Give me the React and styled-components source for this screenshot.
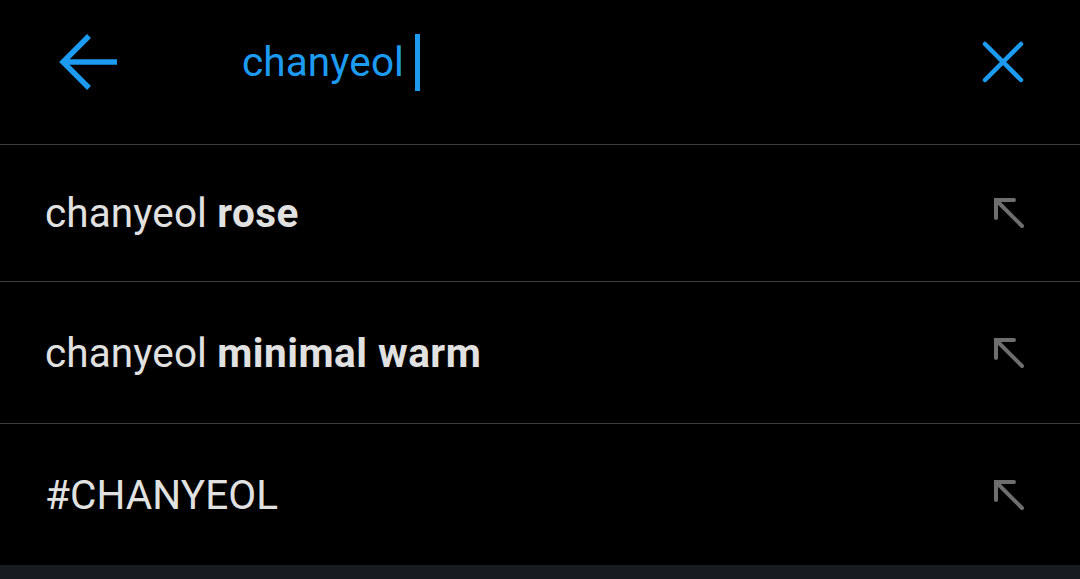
import React from 'react';
import styled, { createGlobalStyle } from 'styled-components';

const BLUE = '#1d9bf0';
const TEXT = '#e1e1e1';
const MUTED = '#6e6e6e';
const LINE = '#3c3c3c';

const GlobalStyle = createGlobalStyle`
  html, body {
    margin: 0;
    padding: 0;
    background: #000;
  }
  body {
    font-family: Roboto, "Liberation Sans", sans-serif;
  }
`;

const PageStyled = styled.div`
  width: 1080px;
  height: 579px;
  display: flex;
  flex-direction: column;
  background: #000;
  overflow: hidden;
`;

const SearchBarStyled = styled.div`
  height: 145px;
  box-sizing: border-box;
  display: flex;
  align-items: center;
  padding: 0 56px 20px 58px;
  border-bottom: 1px solid ${LINE};
  flex-shrink: 0;
`;

const IconButtonStyled = styled.button`
  background: none;
  border: 0;
  padding: 0;
  display: flex;
  align-items: center;
  justify-content: center;
  width: ${({ size }) => size}px;
  height: ${({ size }) => size}px;
`;

const QueryStyled = styled.div`
  flex: 1;
  display: flex;
  align-items: center;
  margin-left: 122px;
  font-size: 40.5px;
  color: ${BLUE};
  letter-spacing: 0.1px;
`;

const CaretStyled = styled.span`
  display: inline-block;
  width: 4.5px;
  height: 57px;
  margin-left: 11px;
  background: ${BLUE};
`;

const SuggestionStyled = styled.div`
  height: ${({ rowHeight }) => rowHeight}px;
  display: flex;
  align-items: center;
  justify-content: space-between;
  padding: 0 55px 0 45px;
  border-bottom: 1px solid ${LINE};
  flex-shrink: 0;
`;

const SuggestionTextStyled = styled.span`
  font-size: 40.5px;
  color: ${TEXT};
  letter-spacing: 0.1px;
  b {
    font-weight: 700;
    letter-spacing: 0.5px;
  }
`;

const FooterStyled = styled.div`
  flex: 1;
  margin-top: -1px;
  background: #181b20;
`;

const BackIcon = () => (
  <svg width="62" height="62" viewBox="0 0 62 62" fill="none">
    <path d="M59 31H5M31 5L5 31L31 57" stroke={BLUE} strokeWidth="5.5" strokeLinecap="butt" />
  </svg>
);

const CloseIcon = () => (
  <svg width="42" height="42" viewBox="0 0 42 42" fill="none">
    <path d="M3 3L39 39M39 3L3 39" stroke={BLUE} strokeWidth="4.5" strokeLinecap="round" />
  </svg>
);

const FillIcon = () => (
  <svg width="32" height="32" viewBox="0 0 32 32" fill="none">
    <path d="M3 21V3H21M3 3L29 29" stroke={MUTED} strokeWidth="4" strokeLinecap="round" strokeLinejoin="miter" />
  </svg>
);

const suggestions = [
  { id: 'rose', plain: 'chanyeol ', bold: 'rose', height: 136 },
  { id: 'minimal', plain: 'chanyeol ', bold: 'minimal warm', height: 141 },
  { id: 'tag', plain: '#CHANYEOL', bold: '', height: 141 },
];

const App = () => (
  <PageStyled>
    <GlobalStyle />
    <SearchBarStyled>
      <IconButtonStyled size={62}>
        <BackIcon />
      </IconButtonStyled>
      <QueryStyled>
        {'chanyeol'}
        <CaretStyled />
      </QueryStyled>
      <IconButtonStyled size={42}>
        <CloseIcon />
      </IconButtonStyled>
    </SearchBarStyled>
    {suggestions.map(({ id, plain, bold, height }) => (
      <SuggestionStyled key={id} rowHeight={height}>
        <SuggestionTextStyled>
          {plain}
          {bold && <b>{bold}</b>}
        </SuggestionTextStyled>
        <FillIcon />
      </SuggestionStyled>
    ))}
    <FooterStyled />
  </PageStyled>
);

export default App;
